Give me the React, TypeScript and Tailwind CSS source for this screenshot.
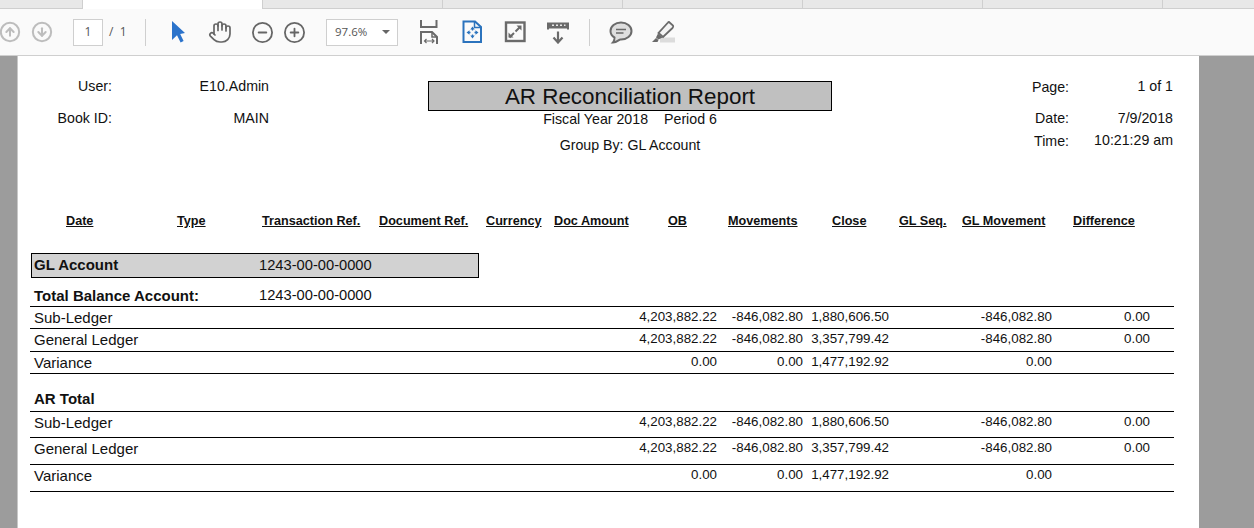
import { CircleArrowDown, CircleArrowUp, CircleMinus, CirclePlus, Hand } from 'lucide-react';

const columns = [
  'Date',
  'Type',
  'Transaction Ref.',
  'Document Ref.',
  'Currency',
  'Doc Amount',
  'OB',
  'Movements',
  'Close',
  'GL Seq.',
  'GL Movement',
  'Difference',
];

type Row = { label: string; ob: string; mov: string; close: string; glMov: string; diff: string };

const rows: Row[] = [
  { label: 'Sub-Ledger', ob: '4,203,882.22', mov: '-846,082.80', close: '1,880,606.50', glMov: '-846,082.80', diff: '0.00' },
  { label: 'General Ledger', ob: '4,203,882.22', mov: '-846,082.80', close: '3,357,799.42', glMov: '-846,082.80', diff: '0.00' },
  { label: 'Variance', ob: '0.00', mov: '0.00', close: '1,477,192.92', glMov: '0.00', diff: '' },
];

function LedgerRows({ heights }: { heights: string[] }) {
  return (
    <>
      {rows.map((row, i) => (
        <div
          key={row.label}
          className={`grid grid-cols-[601px_86px_86px_86px_163px_98px_24px] items-center border-b border-black ${heights[i]}`}
        >
          <span className="pl-1 text-[15px] leading-[17px]">{row.label}</span>
          <span className="pb-0.5 text-right text-[13.33px] leading-[17px]">{row.ob}</span>
          <span className="pb-0.5 text-right text-[13.33px] leading-[17px]">{row.mov}</span>
          <span className="pb-0.5 text-right text-[13.33px] leading-[17px]">{row.close}</span>
          <span className="pb-0.5 text-right text-[13.33px] leading-[17px]">{row.glMov}</span>
          <span className="pb-0.5 text-right text-[13.33px] leading-[17px]">{row.diff}</span>
        </div>
      ))}
    </>
  );
}

function Toolbar() {
  return (
    <div className="flex h-[47px] items-center overflow-hidden border-b border-[#cfcfcf] bg-[#fafafa] font-['Open_Sans',sans-serif] text-[#555]">
      <CircleArrowUp size={22} strokeWidth={2.2} className="-ml-px shrink-0 text-[#bdbdbd]" />
      <CircleArrowDown size={22} strokeWidth={2.2} className="ml-[10px] shrink-0 text-[#bdbdbd]" />
      <div className="ml-5 flex h-[27px] w-[30px] items-center justify-center border border-[#cfcfcf] bg-white text-xs">1</div>
      <span className="w-[42px] pl-[6px] text-xs">/ &nbsp;1</span>
      <div className="h-[27px] w-px bg-[#cfcfcf]" />

      <svg viewBox="0 0 24 24" className="ml-5 h-6 w-6 shrink-0">
        <polygon points="6,1 19,13 14.2,14 17.6,21 14.6,22.5 11,15.2 6,20" fill="#2b73cb" />
      </svg>
      <Hand size={24} strokeWidth={1.7} className="ml-[18px] shrink-0 text-[#666]" />
      <CircleMinus size={23} strokeWidth={1.9} className="ml-[19px] shrink-0 text-[#666]" />
      <CirclePlus size={23} strokeWidth={1.9} className="ml-[9px] shrink-0 text-[#666]" />

      <div className="ml-5 flex h-[27px] w-[72px] shrink-0 items-center justify-between border border-[#cfcfcf] bg-white pr-[7px] pl-2 text-[11.5px]">
        <span>97.6%</span>
        <span className="border-x-[4px] border-t-[4px] border-x-transparent border-t-[#666]" />
      </div>

      {/* fit page width */}
      <svg viewBox="0 0 24 24" className="ml-[19px] h-6 w-6 shrink-0" fill="none" stroke="#6a6a6a" strokeWidth="2">
        <path d="M4 0V7H19.5V0" />
        <path d="M4 24V12H15L20 17V24" />
        <path d="M15 12V17H20" strokeWidth="1.5" />
        <path d="M7.5 21H17M9.5 19L7.5 21L9.5 23M15 19L17 21L15 23" strokeWidth="1.2" />
      </svg>
      {/* fit one page */}
      <svg viewBox="0 0 24 24" className="ml-[19px] h-6 w-6 shrink-0" fill="none" stroke="#2b73bd" strokeWidth="2">
        <path d="M3.5 1.5H15L21 7V22H3.5Z" />
        <path d="M14.5 1.5V7.5H21" strokeWidth="1.5" />
        <path d="M12.5 9V10.5M12.5 14.5V16M9 12.5H10.5M14.5 12.5H16" strokeWidth="1.3" />
        <path d="M10.3 9.5L12.5 6.5L14.7 9.5ZM10.3 15.5L12.5 18.5L14.7 15.5ZM9.5 10.3L6.5 12.5L9.5 14.7ZM15.5 10.3L18.5 12.5L15.5 14.7Z" fill="#2b73bd" stroke="none" />
      </svg>
      {/* full screen */}
      <svg viewBox="0 0 24 24" className="ml-[19px] h-6 w-6 shrink-0" fill="none" stroke="#6a6a6a" strokeWidth="2.4">
        <rect x="3" y="2.5" width="18.5" height="18.5" />
        <path d="M12.5 11.5L17 7M11 13L6.5 17.5" strokeWidth="2" />
        <path d="M13.5 5.5H18.5V10.5ZM5.5 12.5V17.5H10.5Z" fill="#6a6a6a" stroke="none" />
      </svg>
      {/* read mode */}
      <svg viewBox="0 0 24 24" className="ml-[19px] h-6 w-6 shrink-0" fill="none" stroke="#6a6a6a" strokeWidth="2">
        <path d="M1 2.5H23V9.5H21V8.5H3V9.5H1Z" fill="#6a6a6a" stroke="none" />
        <path d="M6 5.3H8M10 5.3H12M14 5.3H16M18 5.3H19.5" stroke="#e8e8e8" strokeWidth="1.5" />
        <path d="M12 11.5V22M7.5 17.5L12 22.5L16.5 17.5" strokeWidth="2.2" />
      </svg>

      <div className="ml-[19px] h-[27px] w-px bg-[#cfcfcf]" />

      {/* comment */}
      <svg viewBox="0 0 24 24" className="ml-[19px] h-6 w-6 shrink-0" fill="#dedede" stroke="#6a6a6a" strokeWidth="2">
        <path d="M12 2.5C6 2.5 1.5 6.5 1.5 11C1.5 14 3.3 16.3 5.5 17.5C5.5 19.5 5 21.5 4 22.5C7 22.5 9.5 20.5 11 19.5C11.3 19.5 11.7 19.5 12 19.5C18 19.5 22.5 15.5 22.5 11C22.5 6.5 18 2.5 12 2.5Z" />
        <path d="M7 9.5H17M7 13H14.5" strokeWidth="1.3" fill="none" />
      </svg>
      {/* highlight */}
      <svg viewBox="0 0 24 24" className="ml-[18px] h-6 w-6 shrink-0" fill="none" stroke="#6a6a6a" strokeWidth="1.8">
        <rect x="9" y="17.5" width="15" height="5" fill="#dcdcdc" stroke="none" />
        <path d="M18 2L22 5.5C22.5 6.5 22 7.5 21.5 8L12 17L7.5 13L17 2.5C17.2 2.2 17.6 2 18 2Z" fill="#f4f4f4" />
        <path d="M7 13.5L5 17.5L7.5 19.5L11.5 17.5ZM5 18L1 22H6.5L7.5 20Z" fill="#6a6a6a" stroke="none" />
      </svg>
    </div>
  );
}

function ReportHeader() {
  return (
    <div className="flex h-[156px] pt-5 text-[14.2px]">
      <div className="w-[251px] pt-px">
        <div className="flex h-5 items-center">
          <span className="w-[94px] text-right">User:</span>
          <span className="flex-1 text-right">E10.Admin</span>
        </div>
        <div className="mt-3 flex h-5 items-center">
          <span className="w-[94px] text-right">Book ID:</span>
          <span className="flex-1 text-right">MAIN</span>
        </div>
      </div>

      <div className="ml-[159px] w-[404px] pt-[5px] text-center">
        <div className="flex h-[30px] items-center justify-center border border-black bg-[#c0c0c0] pt-[2px] text-[22.4px]">
          AR Reconciliation Report
        </div>
        <div className="mt-px flex h-4 items-center justify-center gap-4">
          <span>Fiscal Year 2018</span>
          <span>Period 6</span>
        </div>
        <div className="mt-[10px] flex h-4 items-center justify-center">Group By: GL Account</div>
      </div>

      <div className="ml-[137px] w-[204px] pt-0.5">
        <div className="flex h-5 items-center justify-between">
          <span className="w-[100px] text-right">Page:</span>
          <span className="-mt-0.5 text-right">1 of 1</span>
        </div>
        <div className="mt-[11px] flex h-5 items-center justify-between">
          <span className="w-[100px] text-right">Date:</span>
          <span className="text-right">7/9/2018</span>
        </div>
        <div className="mt-[3px] flex h-5 items-center justify-between">
          <span className="w-[100px] text-right">Time:</span>
          <span className="-mt-0.5 text-right">10:21:29 am</span>
        </div>
      </div>
    </div>
  );
}

export default function App() {
  return (
    <div className="flex h-[528px] w-[1254px] flex-col overflow-hidden font-['Liberation_Sans',Arial,sans-serif] text-[#111]">
      {/* tab strip */}
      <div className="flex h-[9px] border-b border-[#cfcfcf] bg-[#e8e8e8]">
        <div className="w-[83px] border-r border-[#cfcfcf]" />
        <div className="-mb-px w-[180px] border-r border-[#cfcfcf] bg-white" />
        <div className="w-[180px] border-r border-[#cfcfcf]" />
        <div className="w-[180px] border-r border-[#cfcfcf]" />
        <div className="w-[180px] border-r border-[#cfcfcf]" />
        <div className="w-[180px] border-r border-[#cfcfcf]" />
        <div className="w-[180px] border-r border-[#cfcfcf]" />
      </div>

      <Toolbar />

      <div className="flex min-h-0 flex-1 bg-[#9c9c9c]">
        <div className="w-[17px] shrink-0" />
        <div className="w-[1182px] shrink-0 border-l border-[#c8c8c8] bg-white">
          <ReportHeader />

          <div className="grid h-4 grid-cols-[111px_85px_117px_107px_68px_114px_60px_104px_67px_63px_111px_62px] items-center pl-12 text-[12.65px] font-bold underline">
            {columns.map((c) => (
              <span key={c} className="whitespace-nowrap">
                {c}
              </span>
            ))}
          </div>

          <div className="mt-[25px] ml-[13px] flex h-[25px] w-[448px] items-center border border-black bg-[#d2d2d2] text-[15px]">
            <span className="w-[227px] pl-[2px] font-bold">GL Account</span>
            <span className="text-[14.7px]">1243-00-00-0000</span>
          </div>

          <div className="ml-3 w-[1144px]">
            <div className="flex h-[29px] items-end border-b border-black pb-[2px] pl-1 text-[15px] leading-[17px]">
              <span className="w-[225px] font-bold">Total Balance Account:</span>
              <span className="text-[14.7px]">1243-00-00-0000</span>
            </div>
            <LedgerRows heights={['h-[22px]', 'h-[23px] pb-px', 'h-[22px]']} />

            <div className="flex h-[38px] items-end border-b border-black pb-[4px] pl-1 text-[15px] leading-[17px] font-bold">AR Total</div>
            <LedgerRows heights={['h-[26px] pb-[4px]', 'h-[27px] pb-[5px]', 'h-[27px] pb-[5px]']} />
          </div>
        </div>
      </div>
    </div>
  );
}
